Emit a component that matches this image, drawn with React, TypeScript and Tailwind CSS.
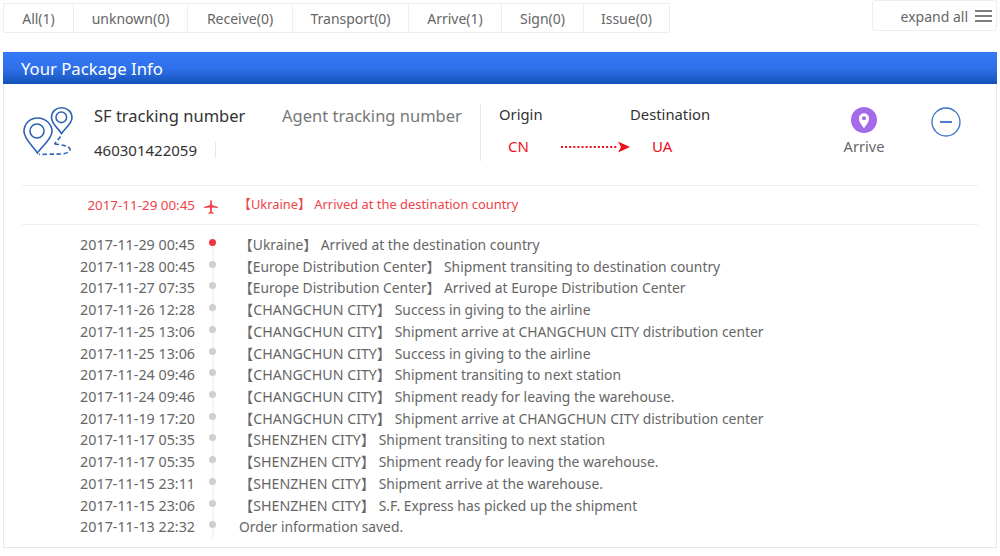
import React from "react";

const FONT = '"Noto Sans", "Noto Sans CJK SC", sans-serif';

const tabs = [
  ["All(1)", "w-[69px]"],
  ["unknown(0)", "w-[114px]"],
  ["Receive(0)", "w-[105px]"],
  ["Transport(0)", "w-[116px]"],
  ["Arrive(1)", "w-[93px]"],
  ["Sign(0)", "w-[82px]"],
  ["Issue(0)", "w-[86px]"],
];

const rows: [string, string, string][] = [
  ["2017-11-29 00:45", "【Ukraine】", "Arrived at the destination country"],
  ["2017-11-28 00:45", "【Europe Distribution Center】", "Shipment transiting to destination country"],
  ["2017-11-27 07:35", "【Europe Distribution Center】", "Arrived at Europe Distribution Center"],
  ["2017-11-26 12:28", "【CHANGCHUN CITY】", "Success in giving to the airline"],
  ["2017-11-25 13:06", "【CHANGCHUN CITY】", "Shipment arrive at CHANGCHUN CITY distribution center"],
  ["2017-11-25 13:06", "【CHANGCHUN CITY】", "Success in giving to the airline"],
  ["2017-11-24 09:46", "【CHANGCHUN CITY】", "Shipment transiting to next station"],
  ["2017-11-24 09:46", "【CHANGCHUN CITY】", "Shipment ready for leaving the warehouse."],
  ["2017-11-19 17:20", "【CHANGCHUN CITY】", "Shipment arrive at CHANGCHUN CITY distribution center"],
  ["2017-11-17 05:35", "【SHENZHEN CITY】", "Shipment transiting to next station"],
  ["2017-11-17 05:35", "【SHENZHEN CITY】", "Shipment ready for leaving the warehouse."],
  ["2017-11-15 23:11", "【SHENZHEN CITY】", "Shipment arrive at the warehouse."],
  ["2017-11-15 23:06", "【SHENZHEN CITY】", "S.F. Express has picked up the shipment"],
  ["2017-11-13 22:32", "", "Order information saved."],
];

function PinsIcon() {
  return (
    <svg width="50" height="50" viewBox="0 0 50 50" fill="none" stroke="#2f62b4" strokeWidth="1.6">
      <path d="M14.5 46 C10 39 1 32 1 24.5 C1 16.5 7 11 14.5 11 C22 11 29 16.5 29 24.5 C29 32 19 39 14.5 46 Z" />
      <circle cx="14" cy="24" r="7" />
      <path d="M38.5 26.5 C35 21 28.5 17 28.5 10.5 C28.5 4.5 33 0.8 38.5 0.8 C44 0.8 49 4.5 49 10.5 C49 17 42 21 38.5 26.5 Z" />
      <circle cx="38.3" cy="10.3" r="5.3" />
      <path d="M37.5 29.5 L31.5 37 M31.5 37 C38 37.5 46 39 47 42 C47.5 44.5 44 46.5 38 47 L16 47.5" strokeDasharray="4.5 2.5" />
    </svg>
  );
}

function PlaneIcon() {
  return (
    <svg width="14" height="14" viewBox="0 0 14 14" fill="#f0424a">
      <path d="M6.3 0.5 C6.3 0.1 7.7 0.1 7.7 0.5 L8 5 L14 7 L14 8 L8 7.5 L7.8 11.5 L9.5 13 L9.5 14 L7 13.2 L4.5 14 L4.5 13 L6.2 11.5 L6 7.5 L0 8 L0 7 L6 5 Z" />
    </svg>
  );
}

function ArriveIcon() {
  return (
    <svg width="26" height="26" viewBox="0 0 26 26">
      <circle cx="13" cy="13" r="13" fill="#a36bea" />
      <path d="M13 21.5 C10.5 17.5 8 15 8 11.5 C8 8.5 10.2 6.2 13 6.2 C15.8 6.2 18 8.5 18 11.5 C18 15 15.5 17.5 13 21.5 Z" fill="#fff" />
      <circle cx="13" cy="11.3" r="2" fill="#a36bea" />
    </svg>
  );
}

function CollapseIcon() {
  return (
    <svg width="30" height="30" viewBox="0 0 30 30" fill="none" stroke="#3a6fc8">
      <circle cx="15" cy="15" r="14" strokeWidth="1.3" />
      <path d="M9 15 H21" strokeWidth="1.8" />
    </svg>
  );
}

function RouteArrow() {
  return (
    <svg className="mt-[2px]" width="70" height="12" viewBox="0 0 70 12">
      <path d="M1 6 H58" stroke="#f0101c" strokeWidth="2" strokeDasharray="2 2.1" fill="none" />
      <path d="M58 0.5 L70 6 L58 11.5 L61 6 Z" fill="#f0101c" />
    </svg>
  );
}

export default function App() {
  return (
    <div className="w-[1000px] h-[556px] overflow-hidden bg-white text-[14px] text-[#666]" style={{ fontFamily: FONT }}>
      <div className="flex items-start justify-between pl-[3px] pr-[3px]">
        <div className="flex mt-[3px] border border-[#eeeeee] h-[30px]">
          {tabs.map(([t, w], i) => (
            <div key={t} className={`${w} flex items-center justify-center text-[14px] text-[#666] ${i ? "border-l border-[#eeeeee]" : ""}`}>
              {t}
            </div>
          ))}
        </div>
        <div className="flex items-center justify-end gap-[7px] w-[125px] h-[31px] pr-[4px] border border-[#eeeeee] rounded-[3px] text-[14px] text-[#666]">
          <span className="mt-[2px]">expand all</span>
          <svg width="17" height="12" viewBox="0 0 17 12" stroke="#555" strokeWidth="1.6">
            <path d="M0 1 H17 M0 6 H17 M0 11 H17" />
          </svg>
        </div>
      </div>

      <div className="mx-[3px] mt-[19px] h-[496px] border-x border-b border-[#e8e8e8]">
        <div className="-mx-px h-[32px] flex items-center pl-[18px] pt-[2px] text-[16.7px] text-white bg-gradient-to-b from-[#3679f5] via-[#2f71ec] to-[#1452b8]">
          Your Package Info
        </div>

        <div className="flex h-[101px] pl-[19px]">
          <div className="w-[71px] pt-[23px]">
            <PinsIcon />
          </div>
          <div className="w-[386px] pt-[20px]">
            <div className="flex text-[16.5px] leading-[24px]">
              <span className="w-[188px] text-[#333]">SF tracking number</span>
              <span className="text-[#777]">Agent tracking number</span>
            </div>
            <div className="flex items-center mt-[12px] text-[15px] leading-[20px] text-[#333]">
              <span className="w-[121px]">460301422059</span>
              <span className="w-px h-[16px] bg-[#e8e8e8]" />
            </div>
          </div>
          <div className="mt-[20px] h-[57px] w-[350px] border-l border-[#e8e8e8] pl-[18px]">
            <div className="flex text-[14.8px] leading-[20px] text-[#333]">
              <span className="w-[131px]">Origin</span>
              <span>Destination</span>
            </div>
            <div className="flex items-center mt-[11px] text-[15px] leading-[22px] text-[#f0101c]">
              <span className="w-[61px] pl-[9px]">CN</span>
              <RouteArrow />
              <span className="ml-[22px]">UA</span>
            </div>
          </div>
          <div className="w-[68px] pt-[23px] flex flex-col items-center">
            <ArriveIcon />
            <span className="mt-[2px] text-[14.6px] leading-[22px] text-[#666]">Arrive</span>
          </div>
          <div className="ml-[33px] pt-[23px]">
            <CollapseIcon />
          </div>
        </div>

        <div className="mx-[18px] h-[40px] flex items-center border-y border-[#efefef] text-[#f0424a]">
          <span className="w-[173px] text-right text-[13.4px]">2017-11-29 00:45</span>
          <span className="w-[36px] flex justify-center pr-[4px] pt-[3px]">
            <PlaneIcon />
          </span>
          <span className="pl-[7px] text-[12.9px] whitespace-nowrap">【Ukraine】 Arrived at the destination country</span>
        </div>

        <div className="mx-[18px] pt-[9px]">
          {rows.map(([time, place, msg], i) => (
            <div key={i} className="flex h-[21.72px] items-center leading-[21.72px] text-[#666]">
              <span className="w-[173px] text-right text-[14.3px]">{time}</span>
              <span className="w-[36px] h-full flex justify-center relative">
                <span className="w-[2px] h-full bg-[#f4f4f4]" />
                <span className={`absolute top-[5px] left-[14px] w-[7px] h-[7px] rounded-full ${i === 0 ? "bg-[#f0353f]" : "bg-[#cfcfcf]"}`} />
              </span>
              <span className="pl-[8px] whitespace-nowrap text-[13.85px]">
                {place ? (
                  <span className={place === place.toUpperCase() ? "text-[14.2px]" : "text-[13.8px]"}>{place} </span>
                ) : null}
                {msg}
              </span>
            </div>
          ))}
        </div>
      </div>
    </div>
  );
}
